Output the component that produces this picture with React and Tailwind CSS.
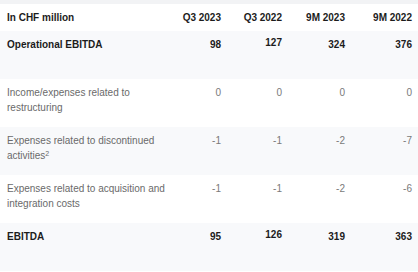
const rows = [
  { label: 'Operational EBITDA', values: ['98', '127', '324', '376'], bold: true },
  { label: 'Income/expenses related to restructuring', values: ['0', '0', '0', '0'] },
  { label: 'Expenses related to discontinued activities', sup: '2', values: ['-1', '-1', '-2', '-7'] },
  { label: 'Expenses related to acquisition and integration costs', values: ['-1', '-1', '-2', '-6'] },
  { label: 'EBITDA', values: ['95', '126', '319', '363'], bold: true },
];

const headers = ['Q3 2023', 'Q3 2022', '9M 2023', '9M 2022'];

const App = () => {
  return (
    <div className="w-[418px] h-[272px] overflow-hidden bg-white font-['Liberation_Sans',Arial,sans-serif] text-[10px]">
      <div className="h-[4px] bg-[#f2f3f5]" />
      <div className="grid grid-cols-[175px_52px_61px_63px_67px] h-[27px] items-center font-bold text-[#1c1c1c]">
        <div className="pl-[7px]">In CHF million</div>
        {headers.map((h) => (
          <div key={h} className="text-right pr-[6px]">{h}</div>
        ))}
      </div>
      {rows.map((row, i) => (
        <div
          key={row.label}
          className={`grid grid-cols-[175px_52px_61px_63px_67px] h-[48px] items-start pt-[6px] leading-[15px] ${
            i % 2 === 0 ? 'bg-[#f8f9fb]' : 'bg-white'
          } ${row.bold ? 'font-bold text-[#1c1c1c]' : 'text-[#6a6a6a]'}`}
        >
          <div className="pl-[7px] pr-[8px]">
            {row.label}
            {row.sup && <sup className="text-[7px] leading-none">{row.sup}</sup>}
          </div>
          {row.values.map((v, j) => (
            <div
              key={j}
              className={`text-right pr-[6px] ${row.bold ? '' : 'text-[#7a7a7a]'} ${
                row.bold && j === 1 ? '-mt-[2px]' : ''
              }`}
            >
              {v}
            </div>
          ))}
        </div>
      ))}
    </div>
  );
};

export default App;
